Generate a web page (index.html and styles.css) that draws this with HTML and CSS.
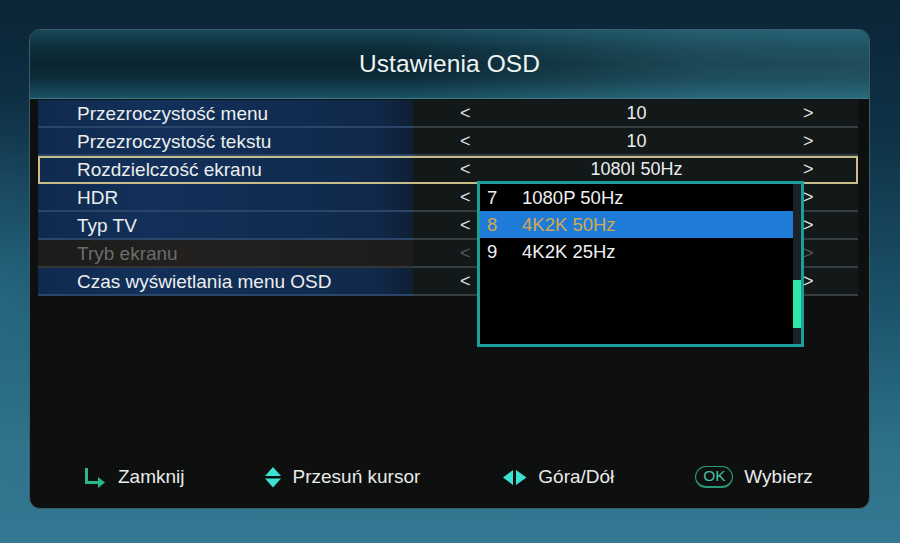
FILE: index.html
```html
<!DOCTYPE html>
<html lang="pl">
<head>
<meta charset="utf-8">
<title>Ustawienia OSD</title>
<link rel="stylesheet" href="styles.css">
</head>
<body>
<div class="screen">
  <div class="panel">
    <div class="header"><h1 class="title">Ustawienia OSD</h1></div>
    <div class="rows">
      <div class="row"><div class="label">Przezroczystość menu</div><div class="value"><span class="arr">&lt;</span><span class="val">10</span><span class="arr">&gt;</span></div></div>
      <div class="row"><div class="label">Przezroczystość tekstu</div><div class="value"><span class="arr">&lt;</span><span class="val">10</span><span class="arr">&gt;</span></div></div>
      <div class="row selected"><div class="label">Rozdzielczość ekranu</div><div class="value"><span class="arr">&lt;</span><span class="val">1080I 50Hz</span><span class="arr">&gt;</span></div></div>
      <div class="row"><div class="label">HDR</div><div class="value"><span class="arr">&lt;</span><span class="val"></span><span class="arr">&gt;</span></div></div>
      <div class="row"><div class="label">Typ TV</div><div class="value"><span class="arr">&lt;</span><span class="val"></span><span class="arr">&gt;</span></div></div>
      <div class="row disabled"><div class="label">Tryb ekranu</div><div class="value"><span class="arr">&lt;</span><span class="val"></span><span class="arr">&gt;</span></div></div>
      <div class="row"><div class="label">Czas wyświetlania menu OSD</div><div class="value"><span class="arr">&lt;</span><span class="val"></span><span class="arr">&gt;</span></div></div>
    </div>

    <div class="dropdown">
      <ul class="options">
        <li class="option"><span class="num">7</span><span>1080P 50Hz</span></li>
        <li class="option active"><span class="num">8</span><span>4K2K 50Hz</span></li>
        <li class="option"><span class="num">9</span><span>4K2K 25Hz</span></li>
      </ul>
      <div class="scrollbar"><div class="thumb"></div></div>
    </div>

    <div class="footer">
      <div class="hint">
        <svg class="ico" width="22" height="21" viewBox="0 0 22 21"><path d="M2.5 1 V15.5 H15" fill="none" stroke="#2bb78e" stroke-width="3"/><polygon points="14,10 21,15.5 14,21" fill="#2bb78e"/></svg>
        <span>Zamknij</span>
      </div>
      <div class="hint">
        <svg class="ico" width="16" height="22" viewBox="0 0 16 22"><polygon points="0,10 8,1 16,10" fill="#3de3d2"/><polygon points="0,12.5 16,12.5 8,21.5" fill="#3de3d2"/></svg>
        <span>Przesuń kursor</span>
      </div>
      <div class="hint tight wide">
        <svg class="ico" width="24" height="15" viewBox="0 0 24 15"><polygon points="0,7.5 10,0 10,15" fill="#3de3d2"/><polygon points="13,0 23.5,7.5 13,15" fill="#3de3d2"/></svg>
        <span>Góra/Dół</span>
      </div>
      <div class="hint tight">
        <span class="ok">OK</span>
        <span>Wybierz</span>
      </div>
    </div>
  </div>
</div>
</body>
</html>
```

FILE: styles.css
```css
html, body {
  margin: 0;
  padding: 0;
}
body {
  width: 900px;
  height: 543px;
  overflow: hidden;
  font-family: "Liberation Sans", Arial, sans-serif;
  background:
    radial-gradient(ellipse 260px 300px at 0px 300px, rgba(60, 140, 170, 0.35), transparent 70%),
    linear-gradient(180deg, #0b2536 0%, #0f3247 25%, #1a5169 55%, #2d7089 82%, #347893 100%);
}
.screen {
  padding: 29px 0 0 29px;
}
.panel {
  position: relative;
  box-sizing: border-box;
  width: 841px;
  height: 480px;
  border: 1px solid #3d5c66;
  border-radius: 11px;
  background: #0e0f0f;
  display: flex;
  flex-direction: column;
  overflow: hidden;
}
.header {
  height: 68px;
  display: flex;
  align-items: center;
  justify-content: center;
  background:
    linear-gradient(90deg, rgba(0,0,0,0) 45%, rgba(70, 150, 170, 0.30) 80%, rgba(70, 150, 170, 0.35) 100%),
    linear-gradient(180deg, #17485a 0%, #0d2d3a 28%, #0a2530 50%, #0d2e3b 72%, #1b5264 100%);
  border-bottom: 1px solid #3d7c8a;
}
.title {
  margin: 0;
  font-weight: normal;
  font-size: 24.5px;
  color: #eef4f4;
  letter-spacing: 0.1px;
}
.rows {
  margin: 1px 0 0 8px;
  width: 820px;
}
.row {
  display: flex;
  height: 28px;
  font-size: 19px;
  color: #eceeee;
}
.label {
  box-sizing: border-box;
  width: 375px;
  height: 28px;
  padding: 3px 0 0 39px;
  background: linear-gradient(90deg, #0f2a4d 0%, #12305a 30%, #10294b 90%, #0e1f33 100%);
  border-bottom: 2px solid #2a4567;
}
.value {
  box-sizing: border-box;
  flex: 1;
  height: 28px;
  display: flex;
  padding: 3px 45px 0 47px;
  font-size: 18px;
  background: #131819;
  border-bottom: 2px solid #353c42;
}
.val {
  flex: 1;
  text-align: center;
}
.arr {
  width: 10px;
  color: #dfe3e3;
}
.row.selected {
  outline: 2px solid #c6bd8b;
  outline-offset: -2px;
  position: relative;
}
.row.selected .label,
.row.selected .value {
  border-bottom-color: transparent;
}
.row.disabled .label {
  background: linear-gradient(90deg, #1b1b1a 0%, #222120 40%, #1c1c1b 100%);
  color: #6c6c6a;
  border-bottom-color: #333638;
}
.row.disabled .arr {
  color: #55595a;
}

.dropdown {
  position: absolute;
  left: 447px;
  top: 151px;
  box-sizing: border-box;
  width: 327px;
  height: 166px;
  border: 3px solid #1e9e9b;
  background: #000;
  display: flex;
}
.options {
  list-style: none;
  margin: 0;
  padding: 0;
  flex: 1;
}
.option {
  display: flex;
  height: 27px;
  align-items: center;
  font-size: 18.5px;
  color: #f0f0f0;
}
.option .num {
  width: 42px;
  padding-left: 7px;
  box-sizing: border-box;
}
.option.active {
  background: #1f7bd8;
  color: #d2a94f;
}
.scrollbar {
  width: 8px;
  background: #1b2227;
  position: relative;
}
.thumb {
  margin-top: 96px;
  height: 48px;
  background: #2de8a7;
}

.footer {
  margin-top: auto;
  margin-bottom: 13px;
  height: 36px;
  display: flex;
  align-items: center;
  gap: 80px;
  padding-left: 54px;
  font-size: 19px;
  color: #e9eaea;
}
.hint {
  display: flex;
  align-items: center;
  gap: 12px;
}
.hint.tight {
  gap: 11px;
}
.hint.wide {
  margin-left: 3px;
  margin-right: 1px;
}
.ico {
  display: block;
}
.ok {
  box-sizing: border-box;
  width: 38px;
  height: 22px;
  border: 1.5px solid #2a9a7c;
  border-bottom-width: 2.5px;
  border-radius: 11px;
  color: #43c29e;
  font-size: 15.5px;
  text-align: center;
  line-height: 18px;
}
```
